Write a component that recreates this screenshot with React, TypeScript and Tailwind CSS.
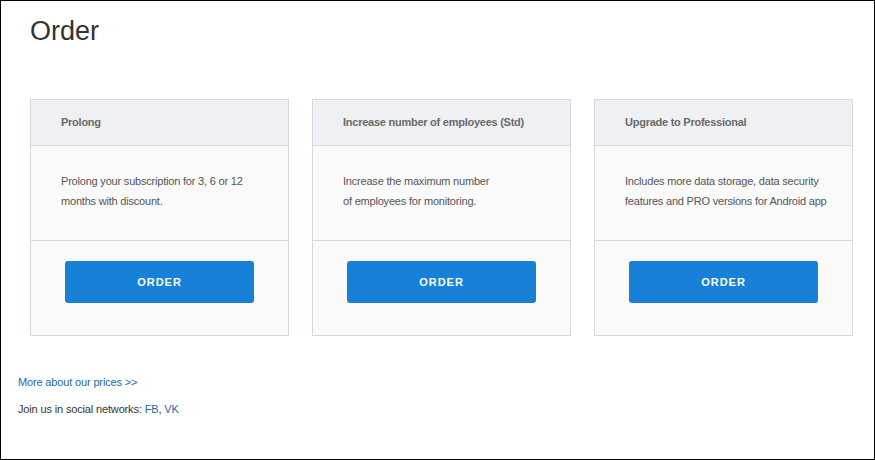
import React from "react";

const cards = [
  {
    title: "Prolong",
    body: ["Prolong your subscription for 3, 6 or 12", "months with discount."],
  },
  {
    title: "Increase number of employees (Std)",
    body: ["Increase the maximum number", "of employees for monitoring."],
  },
  {
    title: "Upgrade to Professional",
    body: ["Includes more data storage, data security", "features and PRO versions for Android app"],
  },
];

export default function App() {
  return (
    <div
      className="w-[875px] h-[460px] box-border border border-black bg-white overflow-hidden"
      style={{ fontFamily: '"Liberation Sans", Arial, sans-serif' }}
    >
      <h1 className="pt-[15px] pl-[29px] text-[27px] leading-[31px] text-[#333] font-normal">Order</h1>

      {/* Offer cards */}
      <div className="mt-[52px] ml-[29px] flex gap-[23px]">
        {cards.map((c) => (
          <div key={c.title} className="w-[259px] border border-[#d6d9de] bg-[#fafafa]">
            <div className="h-[46px] flex items-center px-[30px] bg-[#eef0f3] border-b border-[#d6d9de] text-[11px] font-bold tracking-[-0.25px] text-[#6a6a6a] whitespace-nowrap">
              {c.title}
            </div>
            <div className="h-[95px] pt-[25px] px-[30px] border-b border-[#d6d9de] text-[11px] leading-[20px] tracking-[-0.2px] text-[#555] whitespace-nowrap">
              {c.body[0]}
              <br />
              {c.body[1]}
            </div>
            <div className="h-[94px] pt-[20px] flex justify-center">
              <button className="w-[189px] h-[42px] rounded-[3px] bg-[#1681d6] text-white text-[11px] font-bold tracking-[1px]">
                ORDER
              </button>
            </div>
          </div>
        ))}
      </div>

      <div className="mt-[36px] pl-[17px] text-[11px] leading-[20px] tracking-[-0.15px] text-[#333]">
        <a href="#" className="text-[#1b6aa5]">More about our prices &gt;&gt;</a>
        <p className="mt-[7px]">
          Join us in social networks: <a href="#" className="text-[#1b6aa5]">FB</a>,{" "}
          <a href="#" className="text-[#1b6aa5]">VK</a>
        </p>
      </div>
    </div>
  );
}
